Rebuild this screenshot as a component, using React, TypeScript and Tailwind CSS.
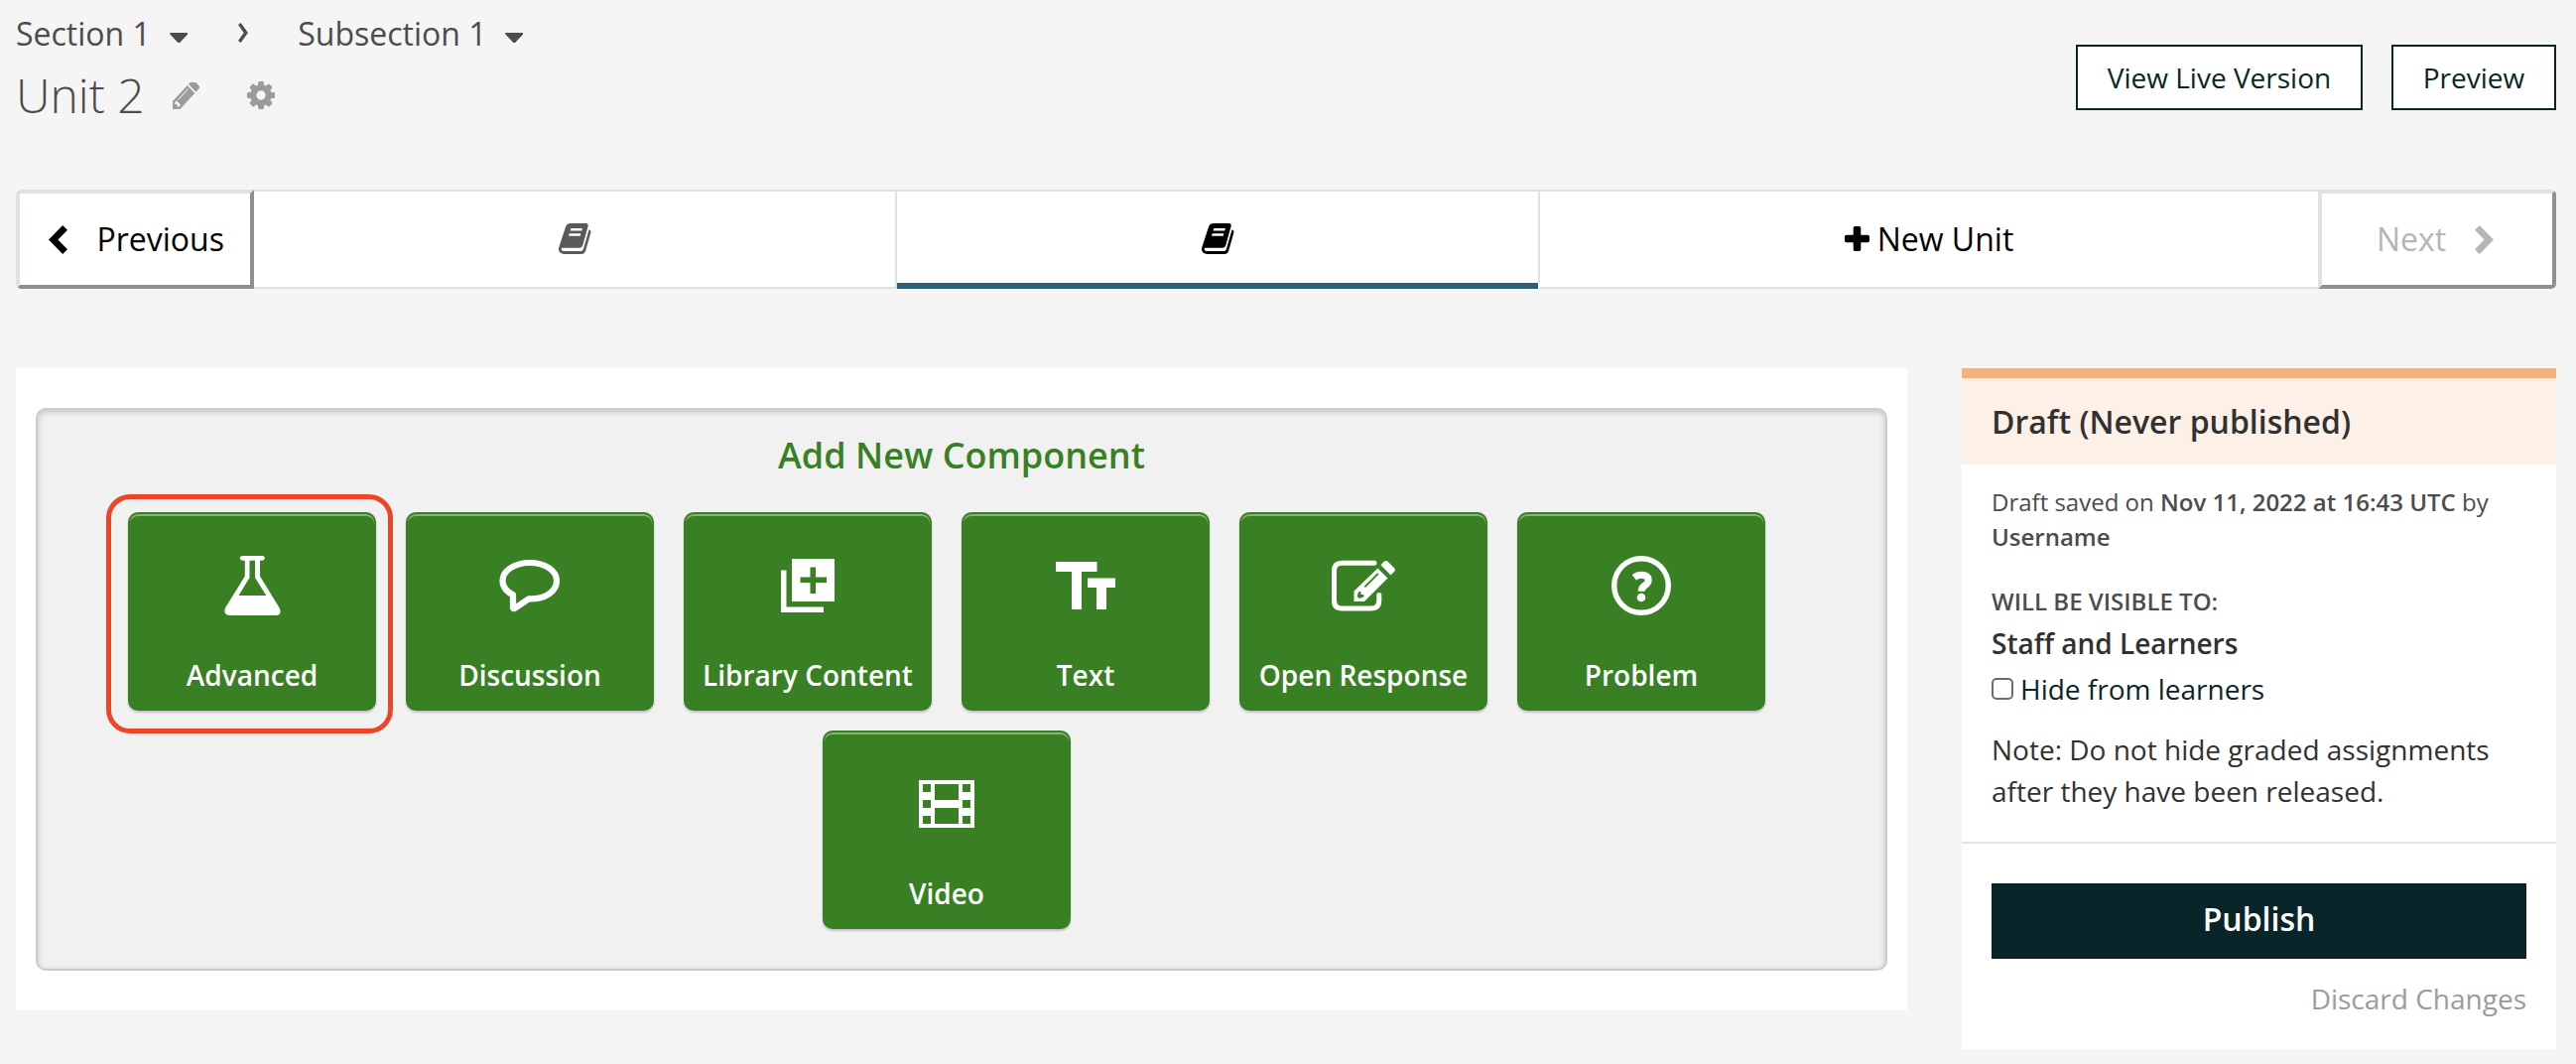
import React from "react";

type IconProps = { className?: string };

const CaretDown = ({ className }: IconProps) => (
  <svg viewBox="0 0 18.5 10.5" className={className} fill="currentColor">
    <path d="M1.2 0H17.3Q18.5 0 18.4 1 18.3 1.4 18 1.8L10.1 10Q9.2 10.8 8.4 10L.5 1.8Q-.1 1.2 0 .8 .2 0 1.2 0Z" />
  </svg>
);

const Pencil = ({ className }: IconProps) => (
  <svg viewBox="128 258 1515 1406" className={className} fill="currentColor" preserveAspectRatio="none">
    <path d="M491 1536l91-91-235-235-91 91v107h128v128h107zm523-928q0-22-22-22-10 0-17 7l-542 542q-7 7-7 17 0 22 22 22 10 0 17-7l542-542q7-7 7-17zm-54-192l416 416-832 832h-416v-416zm683 96q0 53-37 90l-166 166-416-416 166-165q36-38 90-38 53 0 91 38l235 234q37 39 37 91z" />
  </svg>
);

const Cog = ({ className }: IconProps) => (
  <svg viewBox="128 128 1536 1536" className={className} fill="currentColor">
    <path d="M1152 896q0-106-75-181t-181-75-181 75-75 181 75 181 181 75 181-75 75-181zm512-109v222q0 12-8 23t-20 13l-185 28q-19 54-39 91 35 50 107 138 10 12 10 25t-9 23q-27 37-99 108t-94 71q-12 0-26-9l-138-108q-44 23-91 38-16 136-29 186-7 28-36 28h-222q-14 0-24.5-8.5t-11.5-21.5l-28-184q-49-16-90-37l-141 107q-10 9-25 9-14 0-25-11-126-114-165-168-7-10-7-23 0-12 8-23 15-21 51-66.5t54-70.5q-27-50-41-99l-183-27q-13-2-21-12.5t-8-23.5v-222q0-12 8-23t19-13l186-28q14-46 39-92-40-57-107-138-10-12-10-24 0-10 9-23 26-36 98.5-107.5t94.5-71.5q13 0 26 10l138 107q44-23 91-38 16-136 29-186 7-28 36-28h222q14 0 24.5 8.5t11.5 21.5l28 184q49 16 90 37l142-107q9-9 24-9 13 0 25 10 129 119 165 170 7 8 7 22 0 12-8 23-15 21-51 66.5t-54 70.5q26 50 41 98l183 28q13 2 21 12.5t8 23.5z" />
  </svg>
);

const Chevron = ({ className }: IconProps) => (
  <svg viewBox="0 0 19 29" className={className} fill="none" stroke="currentColor" strokeWidth="6.8" strokeLinejoin="miter">
    <path d="M16.6 2.4 4.8 14.5 16.6 26.6" />
  </svg>
);

const Book = ({ className }: IconProps) => (
  <svg viewBox="0 0 33 31" className={className} fill="currentColor">
    <path
      fillRule="evenodd"
      d="M11.5 0H27.5Q30.3 .3 29.6 3L24.2 22.5Q23.5 24.6 21.3 24.7H4.5Q2.6 24.8 2.6 26 2.8 27.9 5 27.9H22.6Q24.2 27.8 24.8 26.2L30.6 6.2Q33 7.2 32.3 9.6L27 28.2Q26 30.8 23.3 31H5Q.9 30.6 0 26.8 -.1 24.5 .8 22.6L7.2 3Q8.4 .2 11.5 0ZM12.3 5 11.6 7.6H23.2L24 5ZM10.7 10.2 10 12.8H21.6L22.4 10.2Z"
    />
  </svg>
);

const Plus = ({ className }: IconProps) => (
  <svg viewBox="0 0 25 25" className={className} fill="currentColor">
    <path d="M10.5 0h4Q16.3 0 16.3 1.8V8.7H23.2Q25 8.7 25 10.5v4Q25 16.3 23.2 16.3H16.3V23.2Q16.3 25 14.5 25h-4Q8.7 25 8.7 23.2V16.3H1.8Q0 16.3 0 14.5v-4Q0 8.7 1.8 8.7H8.7V1.8Q8.7 0 10.5 0Z" />
  </svg>
);

const Flask = () => (
  <svg viewBox="0 0 60 60" className="size-[60px]" fill="#fff">
    <path
      fillRule="evenodd"
      d="M20 0H41Q42.8 .4 42.8 2.4 42.6 4.6 40 4.8H38V20.500L57.600 52.500Q60.500 59.500 54 60H7Q.8 59.500 3 52.500L22.800 20.500V4.800H21Q18 4.600 17.700 2.400 17.800 .4 20 0ZM27.500 4.800V22L16.500 40H44.300L33 22V4.800Z"
    />
  </svg>
);

const Speech = () => (
  <svg viewBox="0 0 62 54" className="h-[54px] w-[62px]" fill="none" stroke="#fff" strokeWidth="6.2" strokeLinejoin="round">
    <path d="M31 4C15.5 4 3.5 12 3.500 22.300 3.500 28 7.500 33 14 36.300V49.500Q14.600 50.700 16 49.700L29.800 40.400C46 41 58 33 58 22.300 58 12 46.500 4 31 4Z" />
  </svg>
);

const Library = () => (
  <svg viewBox="0 0 54 54" className="size-[54px]" fill="#fff">
    <path fillRule="evenodd" d="M11 0H54V43H11ZM29.5 8.5V18.5H19.5V24H29.5V35H35V24H46V18.5H35V8.5Z" />
    <path d="M0 11.5H5.5V48.5H43V54H0Z" />
  </svg>
);

const TextSize = () => (
  <svg viewBox="0 0 60 48" className="h-[48px] w-[60px]" fill="#fff">
    <path d="M0 0H41.5V10H26V48H16V10H0ZM32 16.5H60V26H51V48H41V26H32Z" />
  </svg>
);

const Compose = () => (
  <svg viewBox="0 0 64 52" className="h-[52px] w-[64px]">
    <path d="M43 3.2H10.5Q2.5 3.200 2.500 11V41Q2.500 49 10.500 49H40Q47.800 49 47.800 41V35.500" fill="none" stroke="#fff" strokeWidth="5" strokeLinecap="round" />
    <path fillRule="evenodd" fill="#fff" d="M46.5 8.5 56.500 18.500 33 42H22.500V31.500ZM27 32.500 25.700 36.700 27.800 38.900 32 37.500 33 35.500 29.700 35 29.200 31.700ZM46.200 13.300 32.700 26.800 34 28.100 47.500 14.600Z" />
    <path fill="#fff" d="M49.5 5.300 53 1.600Q54.800 .3 56.600 1.700L63 8.200Q64.600 10 63 12L59.500 15.400Z" />
  </svg>
);

const Question = () => (
  <svg viewBox="0 0 60 60" className="size-[60px]" fill="none" stroke="#fff">
    <circle cx="30" cy="30" r="27.3" strokeWidth="5.4" />
    <path d="M22.8 21.7Q26 19.3 29.8 19.3 37.2 19.3 37.2 24.5 37.2 27.3 33.6 29.9 30.2 32.3 30.2 35.8" strokeWidth="7" />
    <circle cx="30" cy="42" r="4.3" fill="#fff" stroke="none" />
  </svg>
);

const Film = () => (
  <svg viewBox="0 0 56 48" className="h-[48px] w-[56px]" fill="#fff">
    <path
      fillRule="evenodd"
      d="M0 0H56V48H0ZM4 4V12H12V4ZM4 20V28H12V20ZM4 36V44H12V36ZM44 4V12H52V4ZM44 20V28H52V20ZM44 36V44H52V36ZM16 4V20H40V4ZM16 28V44H40V28Z"
    />
  </svg>
);

const components = [
  { label: "Advanced", icon: <Flask />, highlighted: true },
  { label: "Discussion", icon: <Speech /> },
  { label: "Library Content", icon: <Library /> },
  { label: "Text", icon: <TextSize /> },
  { label: "Open Response", icon: <Compose /> },
  { label: "Problem", icon: <Question /> },
  { label: "Video", icon: <Film /> },
];

function Header() {
  return (
    <header className="flex h-[191px] justify-between">
      <div>
        <nav className="mt-[14px] flex h-10 items-center text-[32px] leading-[40px] text-[#4c4c4c]">
          <span>Section 1</span>
          <CaretDown className="mt-2 ml-[19px] h-[10.5px] w-[18.5px]" />
          <svg viewBox="0 0 10 20" className="mr-[50px] mb-0.5 ml-[51px] h-5 w-[10px]" fill="none" stroke="currentColor" strokeWidth="3.4">
            <path d="M1.3 1 7.8 10 1.3 19" />
          </svg>
          <span>Subsection 1</span>
          <CaretDown className="mt-2 ml-[18px] h-[10.5px] w-[18.5px]" />
        </nav>
        <div className="mt-3 flex h-[60px] items-center text-[#4c4c4c]">
          <h1 className="text-[48px] leading-[60px] font-light">Unit 2</h1>
          <Pencil className="ml-[28px] h-[27px] w-[27px] text-[#9b9b9b]" />
          <Cog className="ml-[48px] size-7 text-[#9b9b9b]" />
        </div>
      </div>
      <div className="mt-[45px] flex h-[66px] gap-[29px] text-[28px] text-[#0a2529]">
        <button className="w-[289px] border-2 border-[#0a2529] bg-white pb-px">View Live Version</button>
        <button className="w-[166px] border-2 border-[#0a2529] bg-white pb-px">Preview</button>
      </div>
    </header>
  );
}

function UnitTabs() {
  return (
    <nav className="flex h-[100px] bg-white text-[32px] text-black">
      <button className="flex w-60 items-center rounded-l-[5px] border-4 border-t-[#dee2e6] border-r-[#8e8e93] border-b-[#8e8e93] border-l-[#dee2e6] pl-[29px]">
        <Chevron className="h-[29px] w-[19px]" />
        <span className="ml-[29.5px]">Previous</span>
      </button>
      <div className="flex w-[648px] items-center justify-center border-y-2 border-r-2 border-[#dee2e6]">
        <Book className="mb-px h-[31px] w-[33px] text-[#5a5a5a]" />
      </div>
      <div className="flex w-[648px] flex-col border-t-2 border-[#dee2e6]">
        <div className="flex h-[92px] items-center justify-center border-r-2 border-[#dee2e6] pt-0.5">
          <Book className="h-[31px] w-[33px]" />
        </div>
        <div className="mr-0.5 h-1.5 bg-[#2d5f79]" />
      </div>
      <button className="flex w-[784px] items-center justify-center gap-2 border-y-2 border-[#dee2e6]">
        <Plus className="mb-px size-[25px]" />
        <span>New Unit</span>
      </button>
      <button className="flex w-60 items-center rounded-r-[5px] border-4 border-t-[#dfe1e7] border-r-[#8e9193] border-b-[#8e9193] border-l-[#dfe1e7] pl-[55px] text-[#b5b5b5]">
        <span>Next</span>
        <Chevron className="ml-[29px] h-[29px] w-[19px] rotate-180" />
      </button>
    </nav>
  );
}

function AddComponent() {
  return (
    <main className="h-[647px] w-[1906px] bg-white px-5 py-10">
      <section className="h-full rounded-[10px] border-2 border-[#cbcbcb] bg-[#f1f1f1] pt-[21px] shadow-[inset_0_2px_6px_rgba(0,0,0,0.2)]">
        <h2 className="text-center text-[36px] leading-[50px] font-semibold text-[#388023]">Add New Component</h2>
        <div className="mt-8 flex flex-wrap justify-center gap-y-5 px-[91px]">
          {components.map((c) => (
            <div key={c.label} className="relative mr-[30px]">
              <button className="flex h-[200px] w-[250px] flex-col items-center rounded-[10px] border-2 border-[#388023] bg-[#388023] shadow-[0_2px_2px_rgba(0,0,0,0.2),inset_0_2px_0_rgba(255,255,255,0.4)]">
                <span className="mt-[42px] flex h-[60px] items-center">{c.icon}</span>
                <span className="mt-[41px] text-[28px] leading-[38px] font-semibold whitespace-nowrap text-white">{c.label}</span>
              </button>
              {c.highlighted && (
                <div className="absolute -top-[18px] -left-[22px] h-[241px] w-[289px] rounded-[24px] border-[5px] border-[#ee4427]" />
              )}
            </div>
          ))}
        </div>
      </section>
    </main>
  );
}

function Sidebar() {
  return (
    <aside className="h-[686px] w-[599px] bg-white text-[#313131]">
      <h2 className="h-[97px] border-t-[10px] border-[#f5b27b] bg-[#fcf0e7] pl-[30px] text-[32px] leading-[87px] font-semibold">Draft (Never published)</h2>
      <div className="h-[382px] border-b-2 border-[#e3e3e3] px-[30px] pt-5">
        <p className="text-[24px] leading-[35px] text-[#4c4c4c]">
          Draft saved on <b className="font-semibold">Nov 11, 2022 at 16:43 UTC</b> by
          <br />
          <b className="font-semibold">Username</b>
        </p>
        <h3 className="mt-[30px] text-[24px] leading-[36px] font-semibold text-[#4c4c4c]">WILL BE VISIBLE TO:</h3>
        <p className="mt-px text-[28px] leading-[46px] font-semibold">Staff and Learners</p>
        <label className="flex h-[46px] items-center text-[28px] text-[#0a2529]">
          <input type="checkbox" className="mr-[7px] size-[22px] appearance-none rounded-[5px] border-2 border-[#6b6b6b]" />
          Hide from learners
        </label>
        <p className="mt-[17px] text-[28px] leading-[42px]">Note: Do not hide graded assignments after they have been released.</p>
      </div>
      <div className="flex flex-col items-end px-[30px] pt-10">
        <button className="h-[76px] w-full bg-[#0a2529] pb-[5px] text-[32px] leading-[70px] font-semibold text-white">Publish</button>
        <a className="mt-5 text-[28px] leading-[40px] text-[#9b9b9b]">Discard Changes</a>
      </div>
    </aside>
  );
}

export default function App() {
  return (
    <div className="h-[1072px] w-[2596px] overflow-hidden bg-[#f5f5f5] pr-5 pl-4 font-['Open_Sans',sans-serif]">
      <Header />
      <UnitTabs />
      <div className="mt-20 flex items-start justify-between">
        <AddComponent />
        <Sidebar />
      </div>
    </div>
  );
}
